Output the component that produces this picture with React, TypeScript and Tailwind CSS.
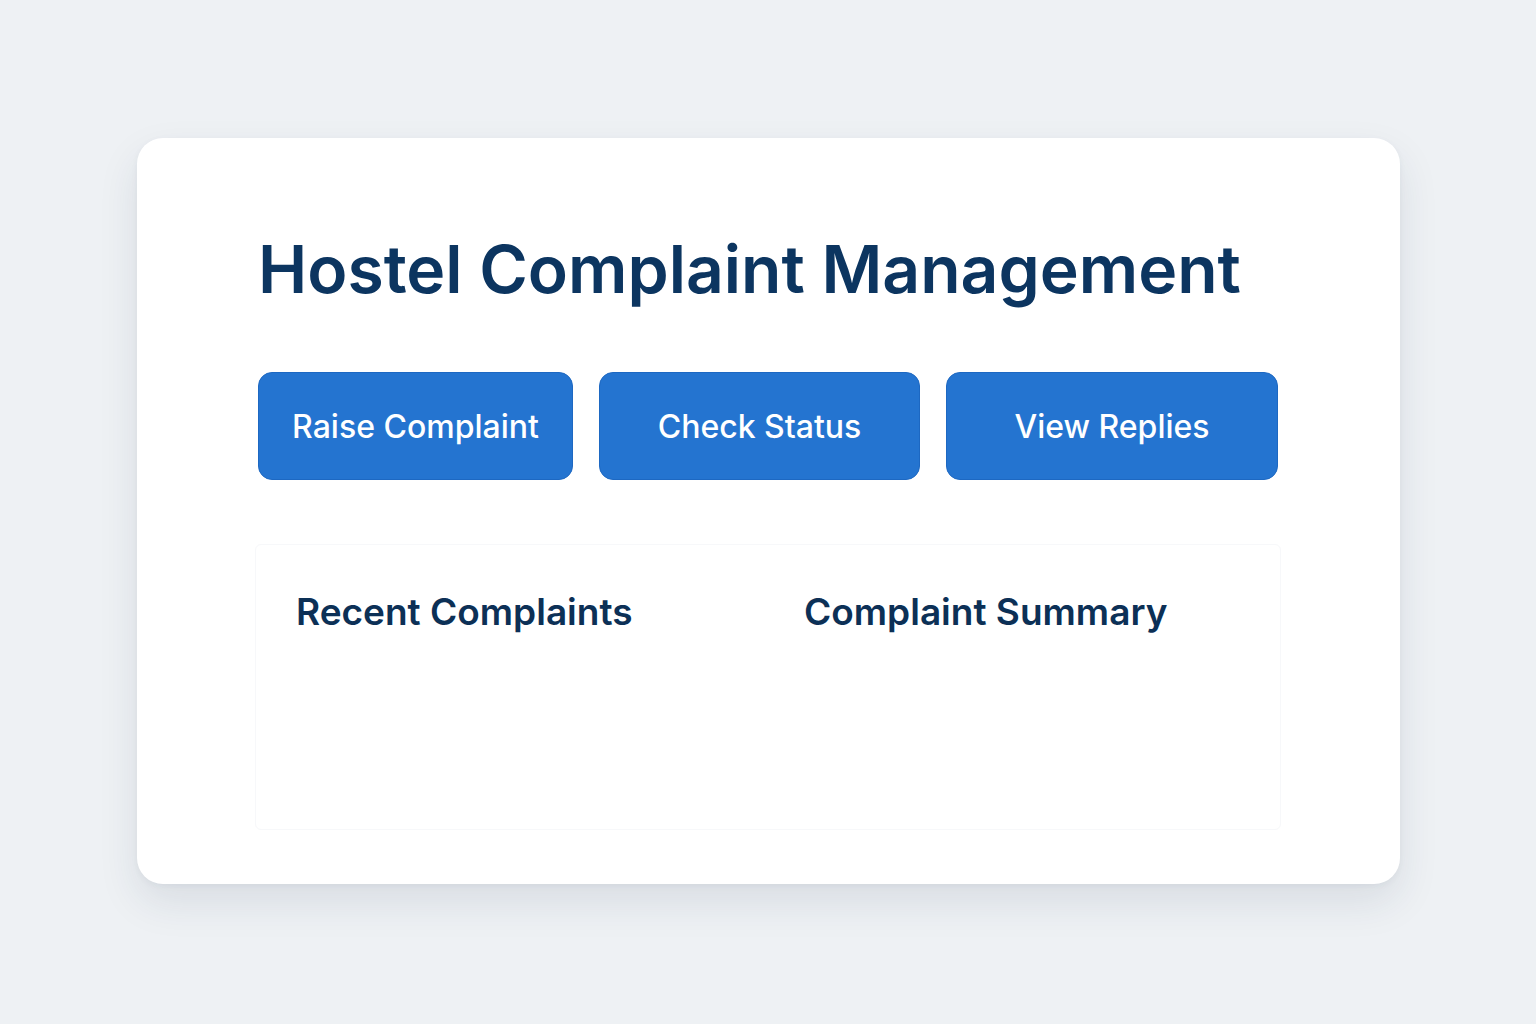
export default function App() {
  return (
    <div className="min-h-screen w-full bg-[#eef1f4] pt-[138px] pl-[137px]" style={{ fontFamily: "Inter, 'Noto Sans', sans-serif" }}>
      <div className="w-[1263px] h-[746px] rounded-[26px] bg-white shadow-[0_18px_40px_rgba(30,50,80,0.10),0_2px_6px_rgba(30,50,80,0.05)] pt-[98px] pl-[121px]">
        <h1 className="text-[66px] leading-none font-semibold text-[#0c3560]">Hostel Complaint Management</h1>
        <div className="flex gap-[26px] mt-[70px]">
          <button className="w-[315px] h-[108px] pt-[2px] rounded-[14px] bg-[#2474d0] border border-[#1d68c2] text-white text-[32px] font-medium">Raise Complaint</button>
          <button className="w-[321px] h-[108px] pt-[2px] rounded-[14px] bg-[#2474d0] border border-[#1d68c2] text-white text-[32px] font-medium">Check Status</button>
          <button className="w-[332px] h-[108px] pt-[2px] rounded-[14px] bg-[#2474d0] border border-[#1d68c2] text-white text-[32px] font-medium">View Replies</button>
        </div>
        <div className="mt-[64px] ml-[-3px] w-[1026px] h-[286px] border border-[#f7f8fa] rounded-[6px] pt-[48px] pl-[40px] grid grid-cols-[508px_1fr]">
          <h2 className="text-[37px] leading-none font-semibold text-[#0c3056]">Recent Complaints</h2>
          <h2 className="text-[37px] leading-none font-semibold text-[#0c3056]">Complaint Summary</h2>
        </div>
      </div>
    </div>
  );
}
